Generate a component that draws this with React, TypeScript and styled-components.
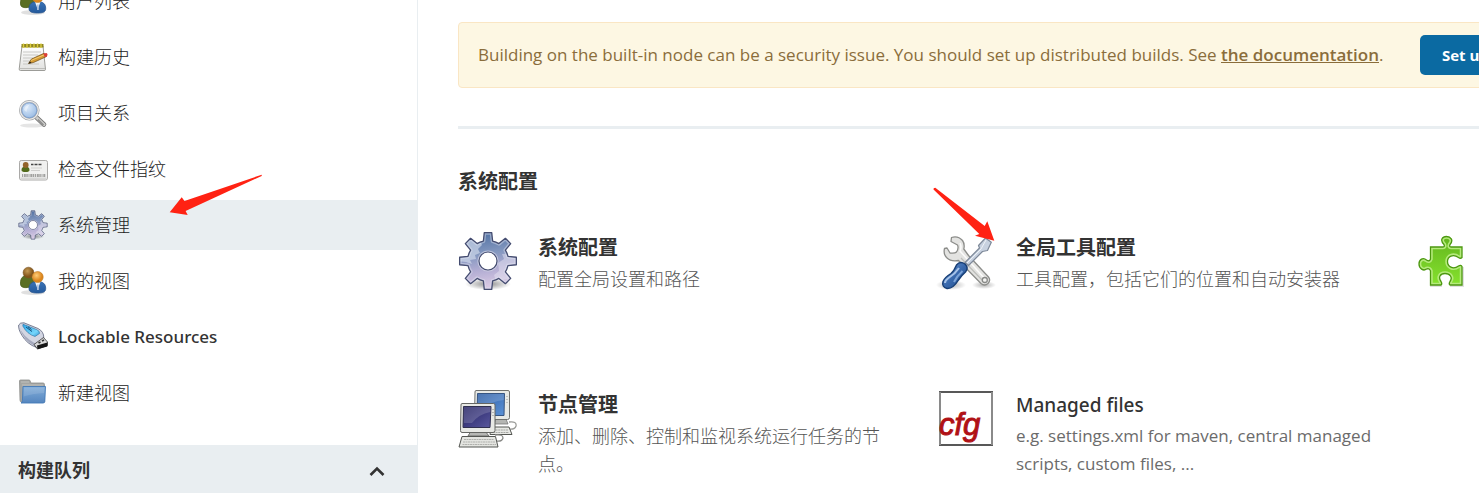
import React from 'react';
import styled, { createGlobalStyle } from 'styled-components';

const GlobalStyle = createGlobalStyle`
  *, *::before, *::after { box-sizing: border-box; }
  body {
    margin: 0;
    overflow-x: hidden;
    background: #fff;
    color: #333;
    font-family: 'Open Sans', 'Noto Sans CJK SC', sans-serif;
    font-size: 17px;
    line-height: 28px;
  }
`;

const labelFont = "'Noto Sans', 'Noto Sans CJK SC', sans-serif";

const Page = styled.div`
  display: flex;
  height: 100vh;
  overflow: hidden;
`;

const Sidebar = styled.aside`
  flex: 0 0 418px;
  border-right: 1px solid #e9eef1;
`;

const TaskList = styled.nav`
  display: flex;
  flex-direction: column;
  gap: 6px;
  margin-top: -24px;
  margin-bottom: 27px;
`;

const Task = styled.a<{ $active?: boolean }>`
  position: relative;
  display: flex;
  align-items: center;
  gap: 10px;
  height: 50px;
  padding: 0 18px;
  background: ${(p) => (p.$active ? '#e9eef1' : 'transparent')};
  color: ${(p) => (p.lang === 'en' ? '#333' : '#222')};
  font-family: ${labelFont};
  font-size: ${(p) => (p.lang === 'en' ? '17px' : '18px')};
  font-weight: ${(p) => (p.lang === 'en' ? 500 : 300)};
  text-decoration: none;
`;

const SmallIcon = styled.svg.attrs({ viewBox: '0 0 30 30', 'aria-hidden': true })`
  flex: none;
  width: 30px;
  height: 30px;
`;

const BigIcon = styled.svg.attrs({ viewBox: '0 0 60 60', 'aria-hidden': true })`
  flex: none;
  width: 60px;
  height: 60px;
`;

const QueueHeader = styled.header`
  display: flex;
  align-items: center;
  justify-content: space-between;
  height: 50px;
  padding: 0 31px 0 18px;
  background: #e9eef1;
`;

const QueueTitle = styled.h2`
  margin: 0;
  font-size: 18px;
  font-weight: 700;
`;

const Collapse = styled.button`
  display: flex;
  padding: 0;
  border: 0;
  background: none;
  color: #333;
`;

const Main = styled.main`
  flex: 1;
  min-width: 0;
  padding: 22px 0 0 40px;
  overflow: hidden;
`;

const Content = styled.div`
  min-width: 1394px;
`;

const Notice = styled.div`
  display: flex;
  align-items: center;
  height: 66px;
  padding: 0 20px 0 19px;
  border: 1px solid #fae6c4;
  border-radius: 4px;
  background: #fdf7e3;
  color: #8a6d3b;
`;

const NoticeText = styled.p`
  flex: 1;
  margin: 0;

  a {
    color: inherit;
    font-weight: 600;
  }
`;

const NoticeActions = styled.div`
  flex: 0 0 411px;
`;

const PrimaryButton = styled.button`
  height: 40px;
  padding: 0 22px;
  border: 0;
  border-radius: 5px;
  background: #0b6aa2;
  color: #fff;
  font: 700 15px 'Open Sans', sans-serif;
`;

const Divider = styled.hr`
  height: 3px;
  margin: 38px 0 39px;
  border: 0;
  background: #e9eef1;
`;

const SectionTitle = styled.h2`
  margin: 0 0 35px;
  font-size: 20px;
  font-weight: 700;
`;

const Cards = styled.div`
  display: grid;
  grid-template-columns: repeat(3, 1fr);
  grid-auto-rows: minmax(117px, auto);
  gap: 40px;
`;

const Card = styled.a`
  position: relative;
  display: flex;
  align-items: flex-start;
  gap: 20px;
  color: #333;
  text-decoration: none;
`;

const CardTitle = styled.h3`
  margin: 0;
  font-family: ${labelFont};
  font-size: ${(p) => (p.lang === 'en' ? '19px' : '20px')};
  font-weight: ${(p) => (p.lang === 'en' ? 500 : 700)};
  line-height: 34px;
`;

const CardText = styled.p`
  margin: 0;
  color: ${(p) => (p.lang === 'en' ? '#6b6b6b' : '#555')};
  font-size: ${(p) => (p.lang === 'en' ? '17px' : '18px')};
  font-weight: ${(p) => (p.lang === 'en' ? 400 : 300)};
`;

const Pointer = styled.svg<{ $left: number; $top: number }>`
  position: absolute;
  left: ${(p) => p.$left}px;
  top: ${(p) => p.$top}px;
  fill: #ff2213;
  pointer-events: none;
`;

const gearOutline = (() => {
  const at = (angle: number, radius: number) => {
    const a = ((angle - 90) * Math.PI) / 180;
    return `${(30 + radius * Math.cos(a)).toFixed(2)} ${(30 + radius * Math.sin(a)).toFixed(2)}`;
  };
  let d = '';
  for (let tooth = 0; tooth < 8; tooth++) {
    const mid = tooth * 45;
    d += tooth === 0 ? `M${at(mid - 13, 20.5)}` : `A20.5 20.5 0 0 1 ${at(mid - 13, 20.5)}`;
    d += `L${at(mid - 7.5, 28.6)}L${at(mid + 7.5, 28.6)}L${at(mid + 13, 20.5)}`;
  }
  return `${d}A20.5 20.5 0 0 1 ${at(-13, 20.5)}Z`;
})();

function GearShape({ id }: { id: string }) {
  return (
    <>
      <defs>
        <linearGradient id={`${id}-body`} x1="0" y1="0" x2="0.15" y2="1">
          <stop offset="0" stopColor="#496b9e" />
          <stop offset="0.42" stopColor="#8397bf" />
          <stop offset="0.7" stopColor="#b2add3" />
          <stop offset="1" stopColor="#d8c8e3" />
        </linearGradient>
        <radialGradient id={`${id}-shadow`}>
          <stop offset="0" stopColor="#000" stopOpacity="0.45" />
          <stop offset="1" stopColor="#000" stopOpacity="0" />
        </radialGradient>
        <clipPath id={`${id}-clip`}>
          <path d={gearOutline} />
        </clipPath>
      </defs>
      <ellipse cx="30" cy="53" rx="23" ry="6" fill={`url(#${id}-shadow)`} />
      <path d={gearOutline} fill={`url(#${id}-body)`} />
      <g clipPath={`url(#${id}-clip)`}>
        <path d="M0 30V8L20 6L24 14L20 18L22 22L17 24L18 28L12 29L14 33L8 31Z" fill="#d3dced" opacity="0.65" />
        <path d="M60 22L44 23L46 28L40 32L41 40L36 44L38 50L60 46Z" fill="#e5e3f1" opacity="0.5" />
        <path d={gearOutline} fill="none" stroke="#dfe4f1" strokeWidth="4" strokeLinejoin="round" opacity="0.45" />
      </g>
      <path d={gearOutline} fill="none" stroke="#444c70" strokeWidth="1.3" strokeLinejoin="round" />
      <circle cx="30" cy="30" r="10.6" fill="#dedfec" opacity="0.6" />
      <circle cx="30" cy="30" r="9" fill="#fff" stroke="#444c70" strokeWidth="1.2" />
    </>
  );
}

function UsersIcon({ id }: { id: string }) {
  return (
    <SmallIcon>
      <defs>
        <radialGradient id={`${id}-a`} cx="0.4" cy="0.35">
          <stop offset="0" stopColor="#c49a55" />
          <stop offset="1" stopColor="#83551a" />
        </radialGradient>
        <radialGradient id={`${id}-b`} cx="0.4" cy="0.35">
          <stop offset="0" stopColor="#ffcd78" />
          <stop offset="1" stopColor="#dc851b" />
        </radialGradient>
        <linearGradient id={`${id}-c`} x1="0" y1="0" x2="0" y2="1">
          <stop offset="0" stopColor="#3b73b6" />
          <stop offset="1" stopColor="#245a9c" />
        </linearGradient>
      </defs>
      <ellipse cx="15" cy="26.5" rx="12" ry="2.5" fill="#000" opacity="0.12" />
      <path d="M2.500 17C2.500 12 5 9.500 9 9.500S16 12 16 18C13 22 6 22.500 3.500 20.500C2.700 19.800 2.500 18.500 2.500 17Z" fill="#5a6f24" stroke="#465a17" strokeWidth="0.800" />
      <circle cx="10.500" cy="6.600" r="5.400" fill={`url(#${id}-a)`} stroke="#7b5222" strokeWidth="0.600" />
      <path d="M11 22.500C11 18 14 15.500 19.500 15.500S27.700 18 27.700 22.500C27.700 26 25 27 19.500 27S11 26 11 22.500Z" fill={`url(#${id}-c)`} stroke="#28568f" strokeWidth="0.800" />
      <path d="M17 15.800L19.700 23.500L22.500 15.800Z" fill="#f1f4f8" />
      <path d="M19.200 18.500H20.600L20.900 24H19Z" fill="#a9bfdc" />
      <circle cx="19.700" cy="11" r="5.500" fill={`url(#${id}-b)`} stroke="#c17a20" strokeWidth="0.600" />
    </SmallIcon>
  );
}

function NotepadIcon() {
  return (
    <SmallIcon>
      <defs>
        <linearGradient id="pad" x1="0" y1="0" x2="0" y2="1">
          <stop offset="0" stopColor="#fff" />
          <stop offset="1" stopColor="#e1e1df" />
        </linearGradient>
      </defs>
      <path d="M4 4H25L27.500 27.500Q27.500 28.500 26 28.500H2.500Q1 28.500 1.200 27Z" fill="url(#pad)" stroke="#9c9c98" />
      <path d="M1.800 26.500H27" stroke="#bdbdba" />
      <path d="M3.500 2H25.500V5.500H3.500Z" fill="#8f8520" />
      <path d="M5.500 1.500V6M9 1.500V6M12.500 1.500V6M16 1.500V6M19.500 1.500V6M23 1.500V6" stroke="#d9cb3f" strokeWidth="1.400" />
      <path d="M5 10H23M5 13H20M5 16H15M5 19H12M5 22H21" stroke="#c3c3c0" strokeWidth="0.900" />
      <path d="M10.500 21.500L13.500 17L26 11.300L28.500 14.500L15.500 20.500Z" fill="#d49a33" stroke="#6b4a17" strokeWidth="0.700" />
      <path d="M13 18.500L27 12.500" stroke="#f3cb72" />
      <path d="M10.500 21.500L11.800 19.500L13.500 21Z" fill="#1f1a12" />
      <path d="M25.300 11.500L28.500 11Q30.300 12 28.800 14.400L26.800 15.300Z" fill="#db4038" />
    </SmallIcon>
  );
}

function SearchIcon() {
  return (
    <SmallIcon>
      <defs>
        <radialGradient id="lens" cx="0.4" cy="0.35" r="0.7">
          <stop offset="0" stopColor="#dceafa" />
          <stop offset="1" stopColor="#8fb4e0" />
        </radialGradient>
      </defs>
      <ellipse cx="14" cy="27.500" rx="12" ry="2" fill="#000" opacity="0.1" />
      <path d="M17.500 18.500L26 26.500" stroke="#777" strokeWidth="4.600" strokeLinecap="round" />
      <path d="M17.500 18.500L26 26.500" stroke="#cdcdcb" strokeWidth="3" strokeLinecap="round" />
      <path d="M20 21.500L25.500 27" stroke="#8d8d8b" strokeWidth="1.400" />
      <circle cx="11.300" cy="12.300" r="9" fill="url(#lens)" stroke="#a3a5a7" strokeWidth="2.600" />
      <circle cx="11.300" cy="12.300" r="9" fill="none" stroke="#ececec" strokeWidth="1.200" />
      <circle cx="11.300" cy="12.300" r="7.400" fill="none" stroke="#7297c8" strokeWidth="0.700" />
      <path d="M6 12Q6.500 7 12 6.800Q9 9 8.500 14Z" fill="#fff" opacity="0.45" />
    </SmallIcon>
  );
}

function IdCardIcon() {
  return (
    <SmallIcon>
      <rect x="1.500" y="6.500" width="28" height="19.500" rx="1.800" fill="#f0f0ef" stroke="#aaa9a7" />
      <path d="M2.500 24.500H28.500" stroke="#d6d6d5" strokeWidth="2" />
      <path d="M3.500 16Q3.500 12.500 7.500 12.500T11.500 16Q11.500 18 7.500 18T3.500 16Z" fill="#526b1c" />
      <circle cx="7.700" cy="11" r="2.900" fill="#93632b" />
      <path d="M13 10.500H24" stroke="#444" strokeWidth="1.500" strokeDasharray="2 .5 1 .5" />
      <path d="M13 14H24M13 16.500H22" stroke="#cfcfcd" strokeWidth="1.200" />
      <path d="M4 21.500H27.500" stroke="#a2a2a0" strokeWidth="3" strokeDasharray="1 .8 2 .5 1.500 .7" />
    </SmallIcon>
  );
}

function UsbIcon() {
  return (
    <SmallIcon>
      <defs>
        <linearGradient id="usb" x1="0" y1="0" x2="1" y2="1">
          <stop offset="0" stopColor="#2aa7ea" />
          <stop offset="0.7" stopColor="#75d5fa" />
          <stop offset="1" stopColor="#2d94d4" />
        </linearGradient>
      </defs>
      <path d="M0.700 3Q2 .3 6 .8L20 6.500Q26 9.500 25.800 16L18.500 25.500Q9 22 4 13.500Q0 7 .7 3Z" fill="#d3d6e2" stroke="#5d637c" strokeWidth="0.800" />
      <path d="M1.500 5Q4 14 18 22L20 20L18 24.500Q5 19 1.500 5Z" fill="#a5a9bd" />
      <path d="M5 2.200L18.500 7.500Q22 9 21.500 11.500L17 14.500Q9 12 4.800 4Z" fill="url(#usb)" stroke="#286c9c" strokeWidth="0.600" />
      <path d="M8 5L14 9.500M10 4.800L13.500 7.500" stroke="#164e79" />
      <path d="M16 22.500L25.500 15.500L29.500 20V23.500L19.500 27Z" fill="#dadada" stroke="#343434" strokeWidth="0.800" />
      <path d="M19 23.500L29.300 20.500V24.500L19.500 27.200Z" fill="#161616" />
      <path d="M20.500 21L22.500 20M24 19L26 18" stroke="#333" strokeWidth="1.600" />
    </SmallIcon>
  );
}

function FolderIcon() {
  return (
    <SmallIcon>
      <defs>
        <linearGradient id="folder" x1="0" y1="0" x2="0" y2="1">
          <stop offset="0" stopColor="#82add9" />
          <stop offset="1" stopColor="#5586bf" />
        </linearGradient>
      </defs>
      <path d="M1.500 3Q1.500 2 2.500 2H11Q12 2 12.200 3L12.800 5H25Q26.500 5 26.500 6.500V24H3.500Q2 24 2 22Z" fill="#a5a6a3" stroke="#8b8d8a" strokeWidth="0.800" />
      <path d="M3 4H11M4 7H25" stroke="#bfc0bd" />
      <path d="M5 8.500H27.500L26.800 23.500Q26.700 25 25 25H3Q4.300 24.500 4.400 22.500Z" fill="url(#folder)" stroke="#447ab8" strokeWidth="0.900" />
      <path d="M6 9.500H26.500L26.200 15Q14 15.500 5.700 18.500Z" fill="#fff" opacity="0.12" />
    </SmallIcon>
  );
}

function ToolsIcon() {
  const wrench =
    'M15.500 6.500Q22 4.500 26.500 9.500Q29 13 27.800 18L32.500 24.500L52.500 46Q55 49.500 52 52.500Q48.500 55.500 45 52.500L22.500 29.500Q15 31 10.500 26.500Q7.200 23 8.500 17.500L11 17L14 22Q19 22.500 20.500 21Q23 17 21.500 14L15 10.500Z';
  return (
    <BigIcon>
      <defs>
        <linearGradient id="handle" x1="0" y1="0" x2="1" y2="1">
          <stop offset="0" stopColor="#6f9bd3" />
          <stop offset="0.5" stopColor="#3969ad" />
          <stop offset="1" stopColor="#214c89" />
        </linearGradient>
        <radialGradient id="tools-shadow">
          <stop offset="0" stopColor="#000" stopOpacity="0.3" />
          <stop offset="1" stopColor="#000" stopOpacity="0" />
        </radialGradient>
      </defs>
      <ellipse cx="15" cy="54" rx="15" ry="5" fill="url(#tools-shadow)" />
      <ellipse cx="48" cy="54" rx="12" ry="4" fill="url(#tools-shadow)" />
      <path d={wrench} fill="#e3e3e1" stroke="#8c8d8a" strokeWidth="1.300" strokeLinejoin="round" />
      <path d="M24 12Q26 16 24 20L49 48" fill="none" stroke="#fbfbfa" strokeWidth="1.600" />
      <path d="M25 27L46 49" stroke="#bcbdba" strokeWidth="1.200" />
      <circle cx="48.800" cy="49" r="2.500" fill="#f4f4f2" stroke="#888987" strokeWidth="1.300" />
      <path d="M29 31.500L43.500 17L42.500 14.500L49.500 7L55.300 11.300L51.500 19.500L46.500 20.500L32.500 34.500Z" fill="#c8d2e0" stroke="#7e8999" strokeWidth="1.200" strokeLinejoin="round" />
      <path d="M31 32L45 18L50 9" fill="none" stroke="#eef2f7" />
      <path d="M20.500 34Q24 29.500 29 33Q33 37 29.500 41Q26 44 22.500 49Q17 58 11 57.500Q5.500 56 7 50.500Q8.500 46.500 15 42.500Q18 40 20.500 34Z" fill="url(#handle)" stroke="#173e75" strokeWidth="1.400" />
      <path d="M23 37Q19 43 12.500 47Q9 49.500 9 52" fill="none" stroke="#a7c3e8" strokeWidth="2" />
      <path d="M26.500 40Q21 45 18 51" fill="none" stroke="#7ca4d8" strokeWidth="2" />
    </BigIcon>
  );
}

function PuzzleIcon() {
  const piece =
    'M16.500 16H29Q31 16 30 13.500C25.500 9 28.500 5.500 32.500 5.500S40 9 36 13.500Q35 16 37 16H48V26.500Q46.500 28 44.500 26.500C39 22.500 33.500 25.500 33.500 30.500S39 39 44.500 35Q47 33.500 48 35.500V54H36Q34.500 53 36 50.500C39 46.500 36 42.500 31 42.500S24 46.500 27 50.500Q28.500 53 27 54H16.500V40Q15.500 37 12.500 38C9.500 40.500 5 37.500 5 33S9 26 12.500 29Q15.500 31 16.500 28Z';
  return (
    <BigIcon>
      <defs>
        <linearGradient id="puzzle" x1="0" y1="0" x2="0" y2="1">
          <stop offset="0" stopColor="#63b51e" />
          <stop offset="1" stopColor="#86e22e" />
        </linearGradient>
        <clipPath id="puzzle-clip">
          <path d={piece} />
        </clipPath>
      </defs>
      <path d="M16 55H28M36 55H49V36" fill="none" stroke="#000" strokeWidth="2" opacity="0.12" />
      <path d={piece} fill="url(#puzzle)" />
      <path d={piece} clipPath="url(#puzzle-clip)" fill="none" stroke="#b5ea7c" strokeWidth="4.500" />
      <path d={piece} fill="none" stroke="#4c9810" strokeWidth="1.300" />
    </BigIcon>
  );
}

function ComputersIcon() {
  return (
    <BigIcon>
      <defs>
        <linearGradient id="screen-back" x1="0" y1="0" x2="1" y2="1">
          <stop offset="0" stopColor="#2a5aa2" />
          <stop offset="1" stopColor="#5d93d7" />
        </linearGradient>
        <linearGradient id="screen-front" x1="0" y1="0" x2="1" y2="1">
          <stop offset="0" stopColor="#211f61" />
          <stop offset="1" stopColor="#5a589e" />
        </linearGradient>
      </defs>
      <path d="M51 34Q59 33 58 38Q57 42 50 41" fill="none" stroke="#9a9b98" strokeWidth="1.300" />
      <path d="M33 39H51L54 46.500H32Z" fill="#e7e8e4" stroke="#555753" />
      <path d="M35 42H50M35 44.500H51" stroke="#a5a6a3" strokeDasharray="2 .6" />
      <path d="M38 31H48L50 36H36Z" fill="#b5b6b3" stroke="#777" strokeWidth="0.800" />
      <path d="M18 2.500H50Q51.500 2.500 51.500 4V29.500Q51.500 31.500 49.500 31.500H18Q16 31.500 16.500 29.500L17 4Q17 2.500 18 2.500Z" fill="#e8e9e5" stroke="#70716e" />
      <path d="M19.500 5.500H46.500L46 27.500H19Z" fill="url(#screen-back)" stroke="#375581" />
      <path d="M20 6H46L45.800 12Q33 13 28 20H20Z" fill="#fff" opacity="0.16" />
      <path d="M49 8V15" stroke="#999" strokeDasharray="1 2" />
      <path d="M37 47Q45 46 45 50Q44 54 38 53" fill="none" stroke="#8a8b88" strokeWidth="1.300" />
      <path d="M13 43H27L31 48H10Z" fill="#b6b7b4" stroke="#70716e" />
      <path d="M4 15.500H35.500Q37 15.500 37 17V42.500Q37 44.500 35 44.500H4Q2.500 44.500 2.500 42.500L3 17Q3 15.500 4 15.500Z" fill="#e8e9e5" stroke="#656663" />
      <path d="M5.500 18.500H33L32 39.500H5Z" fill="url(#screen-front)" stroke="#303050" />
      <path d="M6 19H32.500L32.300 24Q21 26 14 35H6Z" fill="#fff" opacity="0.17" />
      <path d="M35 21V28" stroke="#888" strokeDasharray="1 2" />
      <path d="M4 48.500H37.500L40 59H1Z" fill="#e4e5e1" stroke="#555753" />
      <path d="M6 51.500H36M5 54H37M4.500 56.500H38" stroke="#b0b1ad" strokeDasharray="2 .5" />
    </BigIcon>
  );
}

function ConfigFileIcon() {
  return (
    <BigIcon>
      <path d="M3 4H57M3 57H57" stroke="#222" strokeWidth="1.500" />
      <path d="M4 4V57M56 4V57" stroke="#8a8a8a" strokeWidth="2" />
      <text x="3" y="47" fill="#b01116" stroke="#b01116" fontFamily="'Liberation Sans', sans-serif" fontStyle="italic" fontSize="31">
        cfg
      </text>
    </BigIcon>
  );
}

export default function App() {
  return (
    <>
      <GlobalStyle />
      <Page>
        <Sidebar>
          <TaskList>
            <Task href="#people"><UsersIcon id="people" />用户列表</Task>
            <Task href="#builds"><NotepadIcon />构建历史</Task>
            <Task href="#relations"><SearchIcon />项目关系</Task>
            <Task href="#fingerprint"><IdCardIcon />检查文件指纹</Task>
            <Task href="#manage" $active>
              <SmallIcon><g transform="scale(.5)"><GearShape id="gear-small" /></g></SmallIcon>
              系统管理
              <Pointer $left={169} $top={-26} width="94" height="42" viewBox="0 0 94 42" aria-hidden="true">
                <path d="M.7 38.300L12.700 23.300L15.500 27L92.700 .7V2L16.600 37L18.700 41Z" />
              </Pointer>
            </Task>
            <Task href="#views"><UsersIcon id="views" />我的视图</Task>
            <Task href="#lockable" lang="en"><UsbIcon />Lockable Resources</Task>
            <Task href="#new-view"><FolderIcon />新建视图</Task>
          </TaskList>
          <QueueHeader>
            <QueueTitle>构建队列</QueueTitle>
            <Collapse type="button" aria-label="折叠">
              <svg width="18" height="18" viewBox="0 0 18 18" fill="none" stroke="currentColor" strokeWidth="2.600" aria-hidden="true">
                <path d="M2.500 14L9 7.500L15.500 14" />
              </svg>
            </Collapse>
          </QueueHeader>
        </Sidebar>
        <Main>
          <Content>
            <Notice>
              <NoticeText>
                Building on the built-in node can be a security issue. You should set up distributed builds. See{' '}
                <a href="#documentation">the documentation</a>.
              </NoticeText>
              <NoticeActions>
                <PrimaryButton type="button">Set up agent</PrimaryButton>
              </NoticeActions>
            </Notice>
            <Divider />
            <SectionTitle>系统配置</SectionTitle>
            <Cards>
              <Card href="#configure">
                <BigIcon><GearShape id="gear-big" /></BigIcon>
                <div>
                  <CardTitle>系统配置</CardTitle>
                  <CardText>配置全局设置和路径</CardText>
                </div>
              </Card>
              <Card href="#tools">
                <ToolsIcon />
                <div>
                  <CardTitle>全局工具配置</CardTitle>
                  <CardText>工具配置，包括它们的位置和自动安装器</CardText>
                </div>
                <Pointer $left={-3} $top={-44} width="62" height="54" viewBox="0 0 62 54" aria-hidden="true">
                  <path d="M.7 1.300L2.300 .8L51.700 39L54.300 34.300L61.300 53.700L42 48.700L46.300 47L.5 2.500Z" />
                </Pointer>
              </Card>
              <Card href="#plugins" aria-label="插件管理">
                <PuzzleIcon />
              </Card>
              <Card href="#nodes">
                <ComputersIcon />
                <div>
                  <CardTitle>节点管理</CardTitle>
                  <CardText>添加、删除、控制和监视系统运行任务的节点。</CardText>
                </div>
              </Card>
              <Card href="#managed-files">
                <ConfigFileIcon />
                <div>
                  <CardTitle lang="en">Managed files</CardTitle>
                  <CardText lang="en">e.g. settings.xml for maven, central managed scripts, custom files, ...</CardText>
                </div>
              </Card>
            </Cards>
          </Content>
        </Main>
      </Page>
    </>
  );
}
